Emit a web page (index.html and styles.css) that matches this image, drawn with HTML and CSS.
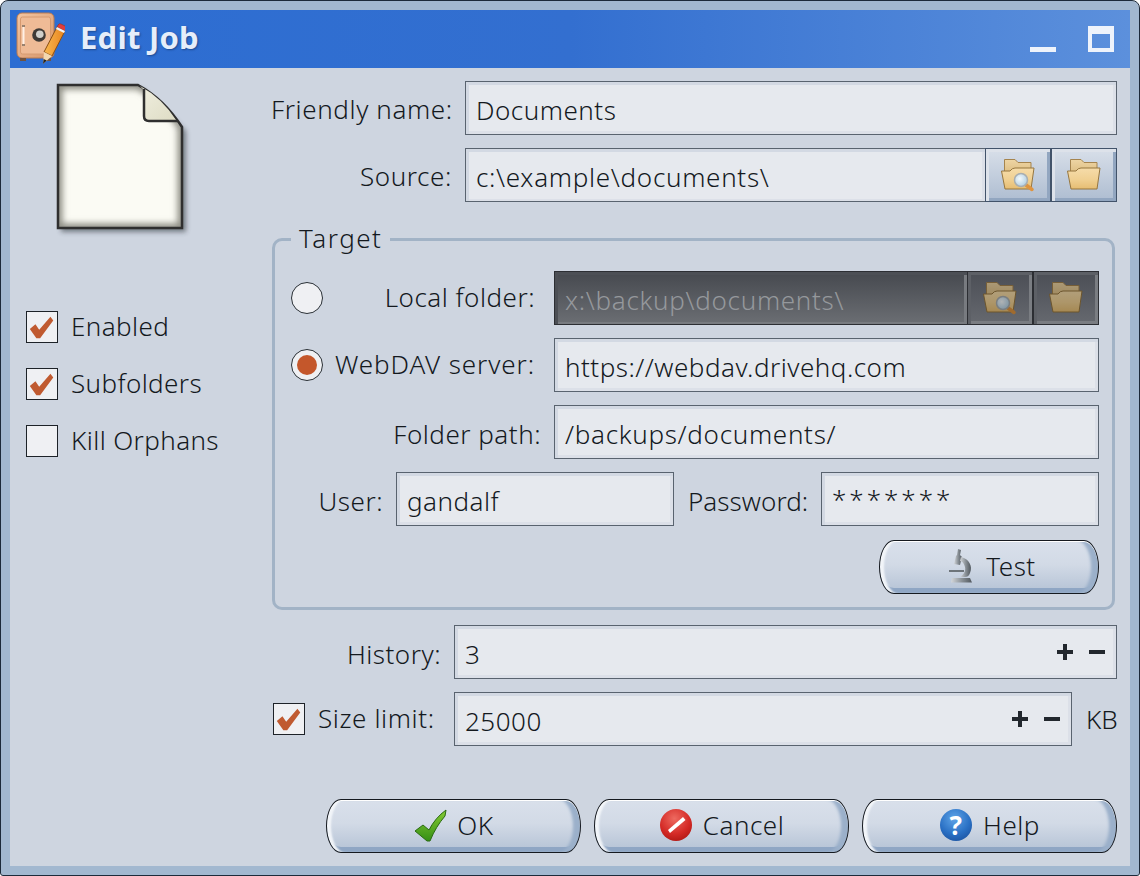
FILE: index.html
```html
<!DOCTYPE html>
<html lang="en">
<head>
<meta charset="utf-8">
<title>Edit Job</title>
<link rel="stylesheet" href="styles.css">
</head>
<body>
<svg class="sprite" aria-hidden="true">
  <defs>
    <linearGradient id="fb" x1="0" y1="0" x2="0" y2="1"><stop offset="0" stop-color="#eed5a4"/><stop offset="1" stop-color="#dcbc80"/></linearGradient>
    <linearGradient id="ff" x1="0" y1="0" x2="0" y2="1"><stop offset="0" stop-color="#f6dcaa"/><stop offset="0.55" stop-color="#f0d092"/><stop offset="1" stop-color="#e6bd72"/></linearGradient>
    <radialGradient id="lens" cx="0.4" cy="0.4" r="0.7"><stop offset="0" stop-color="#f4f9fc"/><stop offset="1" stop-color="#a8cae0"/></radialGradient>
    <linearGradient id="scope" x1="0" y1="0" x2="1" y2="0"><stop offset="0" stop-color="#d4d7da"/><stop offset="0.5" stop-color="#8c9399"/><stop offset="1" stop-color="#50575d"/></linearGradient>
    <linearGradient id="grn" x1="0" y1="0" x2="0" y2="1"><stop offset="0" stop-color="#86cc34"/><stop offset="1" stop-color="#358f14"/></linearGradient>
    <radialGradient id="red" cx="0.45" cy="0.3" r="0.8"><stop offset="0" stop-color="#ee6a60"/><stop offset="0.6" stop-color="#d42a26"/><stop offset="1" stop-color="#a81410"/></radialGradient>
    <radialGradient id="blu" cx="0.45" cy="0.3" r="0.8"><stop offset="0" stop-color="#5fa5e8"/><stop offset="0.6" stop-color="#2a70c4"/><stop offset="1" stop-color="#1a4f9c"/></radialGradient>
    <linearGradient id="safe" x1="0" y1="0" x2="1" y2="1"><stop offset="0" stop-color="#f4c6a2"/><stop offset="1" stop-color="#d69468"/></linearGradient>
    <linearGradient id="pen" x1="0" y1="0" x2="1" y2="0"><stop offset="0" stop-color="#f9b850"/><stop offset="1" stop-color="#e8841e"/></linearGradient>
    <linearGradient id="foldg" x1="0" y1="0" x2="1" y2="1"><stop offset="0" stop-color="#f0efe0"/><stop offset="1" stop-color="#dedcc4"/></linearGradient>
    <filter id="soft" x="-15%" y="-15%" width="130%" height="130%"><feGaussianBlur stdDeviation="2.500"/></filter>
    <filter id="soft2" x="-15%" y="-15%" width="130%" height="130%"><feGaussianBlur stdDeviation="3"/></filter>
    <clipPath id="docclip"><path d="M2 2H82Q108 16 126 44V145H2z"/></clipPath>
    <symbol id="i-folder" viewBox="0 0 34 34">
      <path d="M3.500 1.500H14l3 3h13V16H3.500z" fill="url(#fb)" stroke="#a5844e"/>
      <path d="M0.500 13H9Q11 10 14 10H33L30 31H4z" fill="url(#ff)" stroke="#96763f"/>
    </symbol>
    <symbol id="i-search" viewBox="0 0 34 34">
      <path d="M3.500 1.500H14l3 3h13V16H3.500z" fill="url(#fb)" stroke="#a5844e"/>
      <path d="M0.500 13H9Q11 10 14 10H33L30 31H4z" fill="url(#ff)" stroke="#96763f"/>
      <path d="M25 27l6 4.500" stroke="#de9440" stroke-width="3.500" stroke-linecap="round"/>
      <circle cx="20" cy="22" r="6.500" fill="url(#lens)" stroke="#a9aeb0" stroke-width="1.500"/>
    </symbol>
  </defs>
</svg>

<div class="window">
  <header class="titlebar">
    <svg class="app-icon" viewBox="0 0 50 54">
      <rect x="2" y="1" width="37" height="45" rx="5" fill="url(#safe)" stroke="#b97a50"/>
      <rect x="5.500" y="5" width="30" height="37" rx="2" fill="#efbb96" stroke="#d69a70"/>
      <path d="M8.500 13v21" fill="none" stroke="#fff0e4" stroke-width="2"/>
      <path d="M7 14h3M7 33h3" stroke="#7a6350" stroke-width="1.500"/>
      <circle cx="24" cy="23" r="6.800" fill="#3f3a36"/>
      <circle cx="24.800" cy="22.200" r="3.800" fill="#cfcfcb"/>
      <rect x="5" y="46" width="6" height="3" fill="#6f5340"/><rect x="30" y="46" width="6" height="3" fill="#6f5340"/>
      <path d="M42 15l8 4-13 25-8-4z" fill="url(#pen)" stroke="#8a4f14"/>
      <path d="M43 13q1-2 3-1l4 2q2 1 1 3l-1 2-8-4z" fill="#e03c3c" stroke="#8a2f14" stroke-width="0.500"/>
      <path d="M42 15l8 4-1 2-8-4z" fill="#eef2f6"/>
      <path d="M29 40l8 4-9 8z" fill="#f3d8b0"/><path d="M28 52l.600-5 3.200 1.600z" fill="#222"/>
    </svg>
    <h1 class="title">Edit Job</h1>
    <div class="win-controls">
      <span class="win-min"></span>
      <span class="win-max"></span>
    </div>
  </header>

  <main class="content">
    <aside class="side">
      <svg class="doc" viewBox="0 0 138 158">
        <path d="M3 3H84L128 45V146H3z" fill="#2a3038" opacity="0.55" filter="url(#soft)" transform="translate(2 3)"/>
        <path d="M2 2H82Q108 16 126 44V145H2z" fill="#fbfbf4"/>
        <g clip-path="url(#docclip)"><path d="M2 2H82Q108 16 126 44V145H2z" fill="none" stroke="#8d8d84" stroke-width="9" filter="url(#soft2)"/></g>
        <path d="M2 2H82Q108 16 126 44V145H2z" fill="none" stroke="#2f2f2f" stroke-width="2.500"/>
        <path d="M84 3Q106 15 120 37H92Q89 37 89 33V8z" fill="url(#foldg)"/>
        <path d="M88 6V33Q88 38 93 38H122" fill="none" stroke="#2f2f2f" stroke-width="2.500"/>
      </svg>
      <div class="checks">
        <label class="check-row"><span class="checkbox"><svg viewBox="0 0 32 32"><path d="M3 18l6-5 4 6L25 5l3 4-14 19h-4z" fill="#c05a30"/></svg></span><span class="check-text">Enabled</span></label>
        <label class="check-row"><span class="checkbox"><svg viewBox="0 0 32 32"><path d="M3 18l6-5 4 6L25 5l3 4-14 19h-4z" fill="#c05a30"/></svg></span><span class="check-text">Subfolders</span></label>
        <label class="check-row"><span class="checkbox"></span><span class="check-text">Kill Orphans</span></label>
      </div>
    </aside>

    <section class="form">
      <div class="row">
        <span class="label label-top">Friendly name:</span>
        <div class="field grow">Documents</div>
      </div>
      <div class="row">
        <span class="label label-top">Source:</span>
        <div class="joined grow">
          <div class="field grow path">c:\example\documents\</div>
          <button class="icon-btn"><svg class="ic"><use href="#i-search"/></svg></button>
          <button class="icon-btn"><svg class="ic"><use href="#i-folder"/></svg></button>
        </div>
      </div>

      <div class="group">
        <span class="legend">Target</span>
        <div class="row">
          <span class="radio"></span>
          <span class="label label-fill label-wide raise">Local folder:</span>
          <div class="joined w545 is-dark">
            <div class="field grow dark path">x:\backup\documents\</div>
            <button class="icon-btn dark"><svg class="ic"><use href="#i-search"/></svg></button>
            <button class="icon-btn dark"><svg class="ic"><use href="#i-folder"/></svg></button>
          </div>
        </div>
        <div class="row">
          <span class="radio on"></span>
          <span class="label label-fill label-wide raise dav">WebDAV server:</span>
          <div class="field w545">https://webdav.drivehq.com</div>
        </div>
        <div class="row">
          <span class="label label-fill lower">Folder path:</span>
          <div class="field w545 path">/backups/documents/</div>
        </div>
        <div class="row">
          <span class="label label-fill lower">User:</span>
          <div class="field w278">gandalf</div>
          <span class="label pw-label lower">Password:</span>
          <div class="field w278 secret">*******</div>
        </div>
        <div class="row row-end">
          <button class="pill w220 test-btn">
            <svg class="pill-ic scope-ic" viewBox="0 0 24 36">
              <path d="M9 1l3 1-1 5 2 2-2 8-6-1 2-8 1-1z" fill="url(#scope)"/>
              <path d="M12 9c8 2 12 9 9 16-1 3-3 4-5 4h-5c3-2 6-5 5-10-1-4-3-6-5-6z" fill="url(#scope)"/>
              <rect x="0" y="22" width="15" height="2" fill="#6d747a"/>
              <path d="M3 30H21L23 34.500H2z" fill="url(#scope)"/>
            </svg>
            Test
          </button>
        </div>
      </div>

      <div class="row">
        <span class="label label-hist lower">History:</span>
        <div class="field grow spin"><span>3</span><span class="spin-btns"><i class="plus"></i><i class="minus"></i></span></div>
      </div>
      <div class="row">
        <span class="checkbox size-check"><svg viewBox="0 0 32 32"><path d="M3 18l6-5 4 6L25 5l3 4-14 19h-4z" fill="#c05a30"/></svg></span>
        <span class="label size-label raise">Size limit:</span>
        <div class="field grow spin"><span>25000</span><span class="spin-btns"><i class="plus"></i><i class="minus"></i></span></div>
        <span class="unit">KB</span>
      </div>

      <div class="actions">
        <button class="pill grow">
          <svg class="pill-ic" viewBox="0 0 34 34"><path d="M2 23l8-6 6 5c4-8 10-15 17-20l-1 6c-6 7-11 15-15 25h-3z" fill="url(#grn)" stroke="#2a6a12"/></svg>
          OK
        </button>
        <button class="pill grow">
          <svg class="pill-ic" viewBox="0 0 34 34"><circle cx="17" cy="17" r="16" fill="url(#red)"/><path d="M9 22L24 9l2.500 3L11 25z" fill="#fff"/></svg>
          Cancel
        </button>
        <button class="pill grow">
          <svg class="pill-ic" viewBox="0 0 34 34"><circle cx="17" cy="17" r="16" fill="url(#blu)"/><text x="17" y="27" text-anchor="middle" class="q">?</text></svg>
          Help
        </button>
      </div>
    </section>
  </main>
</div>
</body>
</html>
```

FILE: styles.css
```css
* { box-sizing: border-box; }
html, body { margin: 0; padding: 0; background: #fff; }
body {
  width: 1140px;
  height: 876px;
  font-family: "Noto Sans", "Open Sans", sans-serif;
  font-size: 26px;
  font-weight: 300;
  letter-spacing: 0.5px;
  color: #14191e;
}
.sprite { position: absolute; width: 0; height: 0; }

.window {
  width: 1140px;
  height: 876px;
  display: flex;
  flex-direction: column;
  background: #ced5e0;
  border: 1px solid #1c2a3a;
  border-radius: 8px 8px 3px 3px;
  box-shadow: inset 0 0 0 9px #a2b8d0;
  padding: 9px;
  overflow: hidden;
}

.titlebar {
  height: 58px;
  flex: none;
  display: flex;
  align-items: center;
  padding: 0 16px 0 5px;
  background: linear-gradient(90deg, #2c6dd2 0%, #336fd0 50%, #5c90dc 100%);
}
.app-icon { width: 50px; height: 54px; flex: none; }
.title {
  margin: 0 0 4px 15px;
  font-size: 31px;
  font-weight: 700;
  letter-spacing: 0.25px;
  color: #e6eefa;
  text-shadow: 1px 1px 2px #1d4a90;
}
.win-controls { margin-left: auto; display: flex; align-items: flex-end; gap: 32px; height: 26px; }
.win-min { width: 26px; height: 5px; background: #eef3fb; }
.win-max { width: 26px; height: 26px; border: 4px solid #eef3fb; border-top-width: 8px; }

.content { flex: 1; display: flex; min-height: 0; }

.side { width: 261px; flex: none; padding: 15px 0 0 16px; }
.doc { display: block; width: 138px; height: 158px; margin-left: 30px; }
.checks { display: flex; flex-direction: column; gap: 25px; margin-top: 70px; }
.check-row { display: flex; align-items: center; gap: 13px; height: 32px; line-height: 32px; }
.check-text { position: relative; top: -1px; letter-spacing: 0.4px; }
.checkbox {
  width: 32px; height: 32px; flex: none;
  border: 1px solid #1d2228;
  background: #eff0f3;
  display: block;
}
.checkbox svg { display: block; width: 30px; height: 30px; }

.form {
  flex: 1;
  display: flex;
  flex-direction: column;
  gap: 13px;
  padding: 13px 13px 0 0;
}
.row { display: flex; align-items: center; height: 54px; flex: none; }
.row-end { justify-content: flex-end; margin-top: 1px; }
.grow { flex: 1 1 0; min-width: 0; }

.label { white-space: nowrap; flex: none; }
.label-top { width: 181px; margin-right: 13px; text-align: right; padding-top: 2px; letter-spacing: 0.6px; }
.label-fill { flex: 1; text-align: right; margin-right: 13px; }
.label-wide { margin-right: 19px; }
.raise { padding-bottom: 3px; }
.lower { padding-top: 4px; }
.dav { letter-spacing: 0.9px; }
.pw-label { width: 120px; margin: 0 13px 0 14px; text-align: right; letter-spacing: 0.05px; }
.label-hist { width: 170px; margin-right: 13px; text-align: right; }
.size-check { margin: 0 13px 0 2px; }
.size-label { width: 117px; margin-right: 19px; letter-spacing: 0.6px; }
.unit { margin-left: 14px; width: 31px; flex: none; letter-spacing: 0; }

.field {
  height: 54px;
  display: flex;
  align-items: center;
  padding: 3px 11px 0;
  background: #e6e9ee;
  box-shadow:
    inset 0 0 0 1px #59636f,
    inset 3px 3px 0 1px #d3d9e3,
    inset -3px -3px 0 1px #dce0e8;
  white-space: nowrap;
}
.path { letter-spacing: 0.7px; }
.w545 { width: 545px; flex: none; }
.w278 { width: 278px; flex: none; }
.secret { letter-spacing: 3px; padding-top: 0; }
.joined { display: flex; height: 54px; }
.joined .field { box-shadow: inset 1px 1px 0 #59636f, inset 0 -1px 0 #59636f, inset 3px 3px 0 1px #d3d9e3, inset -3px -3px 0 0 #dce0e8; }

.field.dark {
  background: linear-gradient(180deg, #45484e, #6c6f74);
  color: #95989c;
  box-shadow: inset 1px 1px 0 #2c2e33, inset 0 -1px 0 #2c2e33, inset 3px 3px 0 1px #4c4f55, inset -3px -3px 0 0 #787b80;
}

.icon-btn {
  width: 66px; height: 54px; flex: none;
  padding: 0;
  display: flex; align-items: center; justify-content: center;
  border: 1px solid #42536a;
  background: linear-gradient(180deg, #d8dfe9, #aebdd1);
  box-shadow: inset 3px 3px 0 #dde2ea, inset -3px -3px 0 #92a6c0;
}
.icon-btn.dark {
  background: linear-gradient(180deg, #4b4e55, #66696f);
  border-color: #2c2e33;
  box-shadow: inset 3px 3px 0 #5d6066, inset -3px -3px 0 #7a7d82;
}
.ic { width: 34px; height: 34px; display: block; }
.icon-btn.dark .ic { filter: brightness(0.72); }

.group {
  position: relative;
  display: flex;
  flex-direction: column;
  gap: 13px;
  margin: 23px 2px 2px 1px;
  padding: 30px 13px 13px 16px;
  border: 3px solid #a2b3c6;
  border-radius: 10px;
}
.legend {
  position: absolute;
  top: -21px;
  left: 16px;
  padding: 0 8px;
  line-height: 36px;
  letter-spacing: 1.500px;
  background: #ced5e0;
}

.radio {
  position: relative;
  width: 32px; height: 32px; flex: none;
  border: 1px solid #2a3036;
  border-radius: 50%;
  background: #eff0f3;
  margin-right: 12px;
}
.radio.on::after {
  content: "";
  position: absolute;
  left: 5px; top: 5px;
  width: 20px; height: 20px;
  border-radius: 50%;
  background: #c4572b;
}

.pill {
  display: flex; align-items: center; justify-content: center; gap: 10px;
  height: 54px;
  padding: 0 0 3px;
  font: inherit;
  letter-spacing: inherit;
  color: inherit;
  border: 1px solid #15191f;
  border-radius: 15px / 27px;
  background: linear-gradient(180deg, #d9e0eb 0%, #d2dae6 45%, #b4c2d5 100%);
  box-shadow:
    inset 0 1px 0 #fff,
    inset 5px 0 2px -1px #f2f5f9,
    inset -8px 0 3px -1px #9bb0ca,
    inset 0 -5px 0 #8fa6c4;
}
.test-btn { padding-left: 7px; gap: 13px; }
.w220 { width: 220px; flex: none; }
.pill-ic { width: 34px; height: 34px; flex: none; }
.scope-ic { width: 24px; height: 36px; }
.q { font: 700 26px "Noto Sans", sans-serif; fill: #fff; }

.spin { justify-content: space-between; }
.spin-btns { display: flex; gap: 16px; padding-right: 1px; margin-top: -3px; }
.plus, .minus { position: relative; display: block; width: 16px; height: 16px; }
.plus::before, .minus::before {
  content: ""; position: absolute; left: 0; top: 6px; width: 16px; height: 4px; background: #22272d;
}
.plus::after {
  content: ""; position: absolute; left: 6px; top: 0; width: 4px; height: 16px; background: #22272d;
}

.actions { display: flex; gap: 13px; margin: 40px 0 0 55px; }
```
